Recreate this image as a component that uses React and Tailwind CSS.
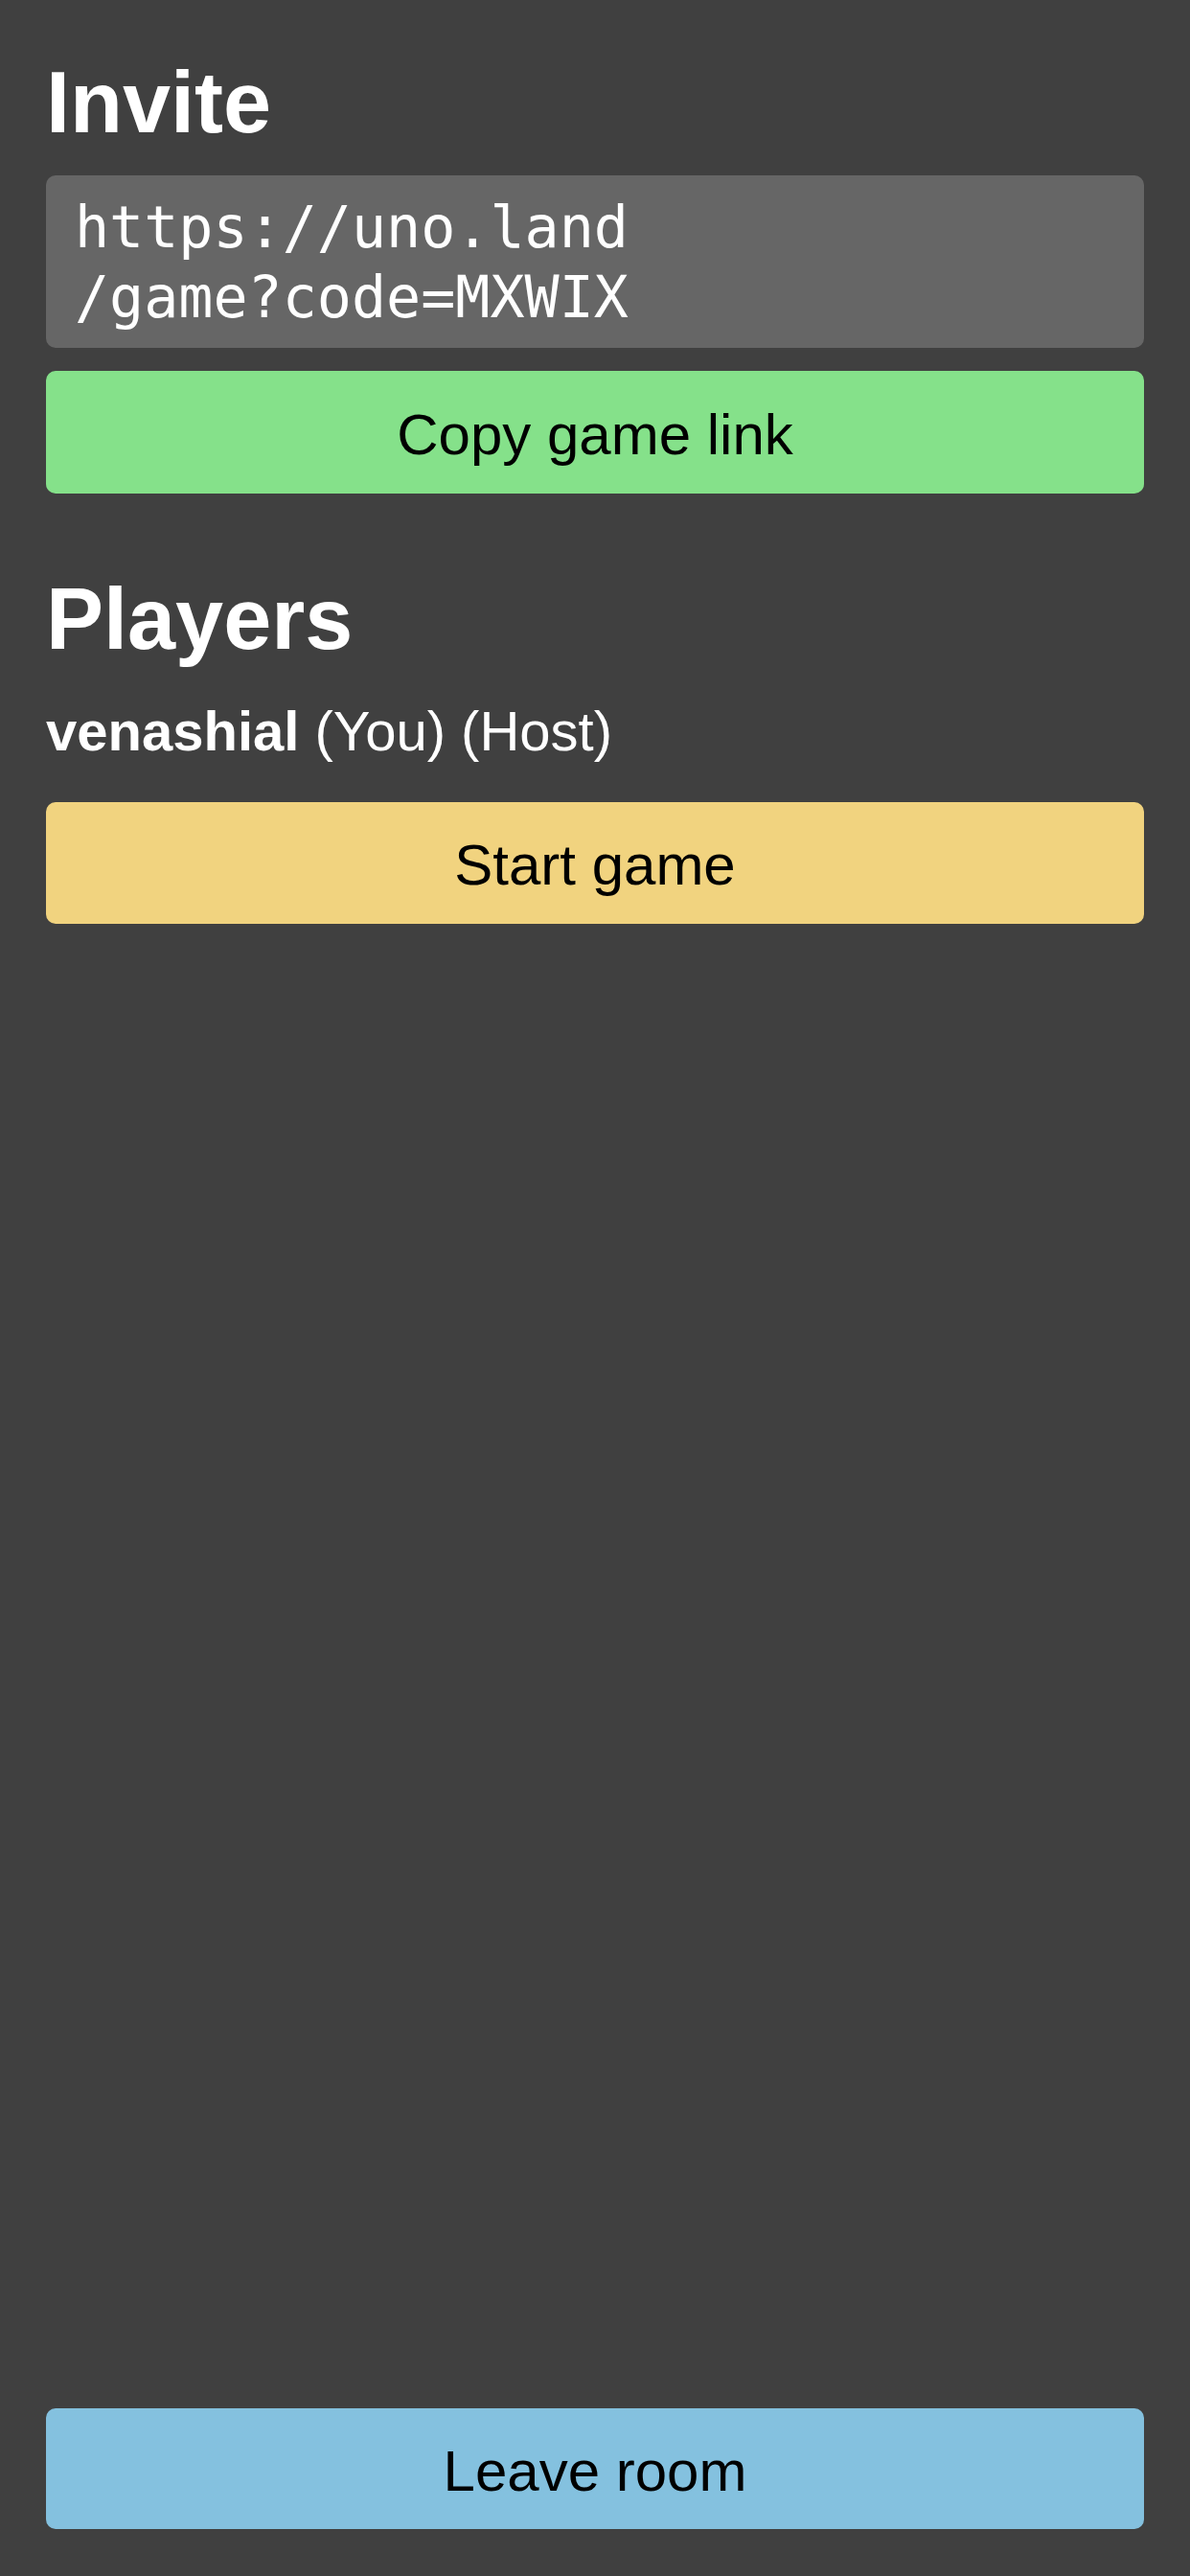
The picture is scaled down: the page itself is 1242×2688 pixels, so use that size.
import React from "react";

export default function App() {
  return (
    <div
      className="min-h-screen flex flex-col bg-[#404040] px-[48px] pt-[57px] pb-[49px] text-white font-['Liberation_Sans',Arial,sans-serif]"
    >
      <h1 className="text-[90px] leading-[100px] font-bold text-white">Invite</h1>

      <div className="mt-[26px] h-[180px] rounded-[10px] bg-[#666666] pl-[30px] pr-[24px] pt-[18px] pb-[16px] font-['DejaVu_Sans_Mono',monospace] text-[60px] leading-[73px] text-white">
        <div>https://uno.land</div>
        <div>/game?code=MXWIX</div>
      </div>

      <button className="mt-[24px] h-[128px] w-full rounded-[10px] bg-[#85e18a] pt-1 text-[60px] leading-[69px] text-black font-['Liberation_Sans',Arial,sans-serif] flex items-center justify-center">
        Copy game link
      </button>

      <h1 className="mt-[81px] text-[90px] leading-[100px] font-bold text-white">Players</h1>

      <div className="mt-[33px] text-[58px] leading-[67px] text-white">
        <span className="font-bold">venashial</span> (You) (Host)
      </div>

      <button className="mt-[41px] h-[127px] w-full rounded-[10px] bg-[#f1d37f] pt-1 text-[60px] leading-[69px] text-black font-['Liberation_Sans',Arial,sans-serif] flex items-center justify-center">
        Start game
      </button>

      <button className="mt-auto h-[126px] w-full rounded-[10px] bg-[#84c1df] pt-1 text-[60px] leading-[69px] text-black font-['Liberation_Sans',Arial,sans-serif] flex items-center justify-center">
        Leave room
      </button>
    </div>
  );
}
